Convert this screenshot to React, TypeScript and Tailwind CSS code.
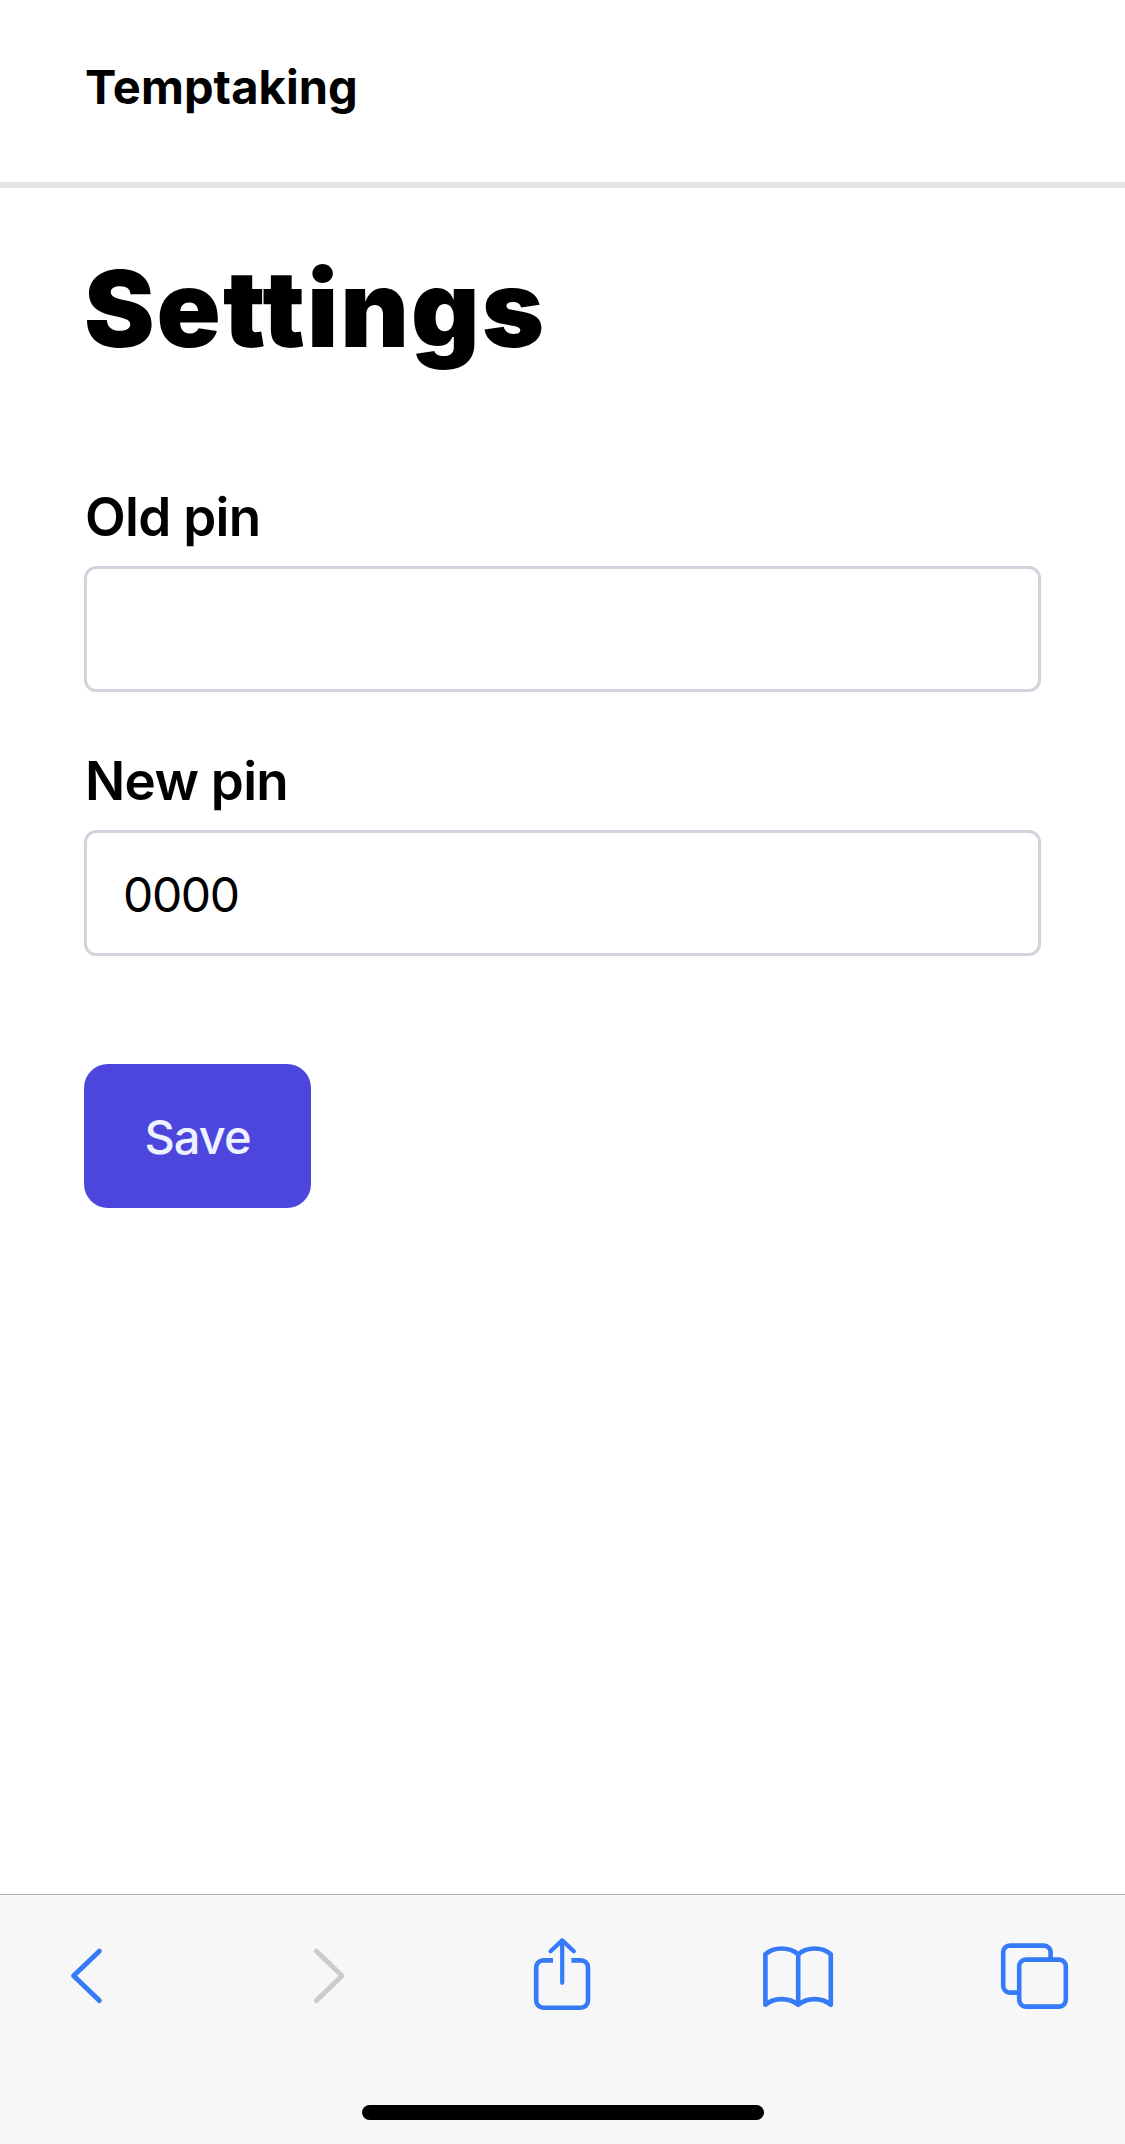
import type { ReactNode } from 'react';

type IconProps = { className: string; children: ReactNode };

function Icon({ className, children }: IconProps) {
  return (
    <svg
      viewBox="0 0 80 80"
      fill="none"
      stroke="currentColor"
      strokeWidth="4.6"
      strokeLinecap="round"
      strokeLinejoin="round"
      className={`size-20 shrink-0 ${className}`}
    >
      {children}
    </svg>
  );
}

function Toolbar() {
  return (
    <nav className="flex h-[250px] flex-col items-center border-t border-[#b1b1b1] bg-[#f7f7f7]">
      <div className="mt-10 flex w-full pl-[47px] text-[#357af6]">
        <Icon className="">
          <path d="M52.3 16.2 26.6 40.8l25.7 24.7" strokeWidth="5" />
        </Icon>
        <Icon className="ml-[162px] text-[#cbcbcb]">
          <path d="M27.5 16.2 53 40.8 27.5 65.5" strokeWidth="5" />
        </Icon>
        <Icon className="ml-[153px]">
          <path d="M40.2 5.4V47.8M28.6 16.3 40.2 5.4l11.6 10.9" strokeWidth="4.2" />
          <path
            d="M31 25.4H21.2a7 7 0 0 0-7 7V65.7a7 7 0 0 0 7 7H59a7 7 0 0 0 7-7V32.4a7 7 0 0 0-7-7H49.4"
            strokeLinecap="butt"
          />
        </Icon>
        <Icon className="ml-[156px]">
          <path d="M40.2 19.2C31 11.6 16 11.6 7.4 19.2V69.8C16 62.2 31 62.2 40.2 69.8C49.4 62.2 64 62.2 72.8 69.8V19.2C64 11.6 49.4 11.6 40.2 19.2V69.8" />
        </Icon>
        <Icon className="ml-[157px]">
          <rect x="24.2" y="24.6" width="46.6" height="47" rx="6.5" />
          <path
            d="M55.6 24.6V17.1a6.5 6.5 0 0 0-6.5-6.5H14.7a6.5 6.5 0 0 0-6.5 6.5V51.1a6.5 6.5 0 0 0 6.5 6.5H24.2"
            strokeLinecap="butt"
          />
        </Icon>
      </div>
      <div className="mt-[90px] h-[15px] w-[402px] rounded-full bg-black" />
    </nav>
  );
}

type FieldProps = { id: string; label: string; value?: string; className: string };

function Field({ id, label, value, className }: FieldProps) {
  return (
    <div className={`flex flex-col ${className}`}>
      <label
        htmlFor={id}
        className="mb-[14px] h-[70px] pl-px text-[53px] leading-[70px] font-semibold tracking-[-0.7px]"
      >
        {label}
      </label>
      <input
        id={id}
        type="text"
        defaultValue={value}
        className="h-[126px] w-full rounded-[12px] border-3 border-[#d1d4dc] bg-white px-9 pt-0.5 text-[48px] tracking-[-1.4px] outline-none"
      />
    </div>
  );
}

export default function App() {
  return (
    <div className="flex h-[2144px] w-[1125px] flex-col overflow-hidden bg-white font-['Inter',sans-serif] text-black">
      <header className="flex h-[188px] shrink-0 items-start border-b-6 border-[#e4e5e9] px-[84px]">
        <span className="mt-[51px] pl-px text-[47px] leading-[72px] font-bold tracking-[0.1px]">
          Temptaking
        </span>
      </header>
      <main className="flex flex-1 flex-col px-[84px]">
        <h1 className="mt-[61px] text-[106px] leading-[120px] font-black tracking-[2px]">
          Settings
        </h1>
        <form className="flex flex-col">
          <Field id="old-pin" label="Old pin" className="mt-[113px]" />
          <Field id="new-pin" label="New pin" value="0000" className="mt-[54px]" />
          <button
            type="button"
            className="mt-[108px] h-36 w-[227px] rounded-[24px] bg-[#4c46dc] pt-[3px] text-[47px] font-medium tracking-[-1px] text-[#eef1ff]"
          >
            Save
          </button>
        </form>
      </main>
      <Toolbar />
    </div>
  );
}
